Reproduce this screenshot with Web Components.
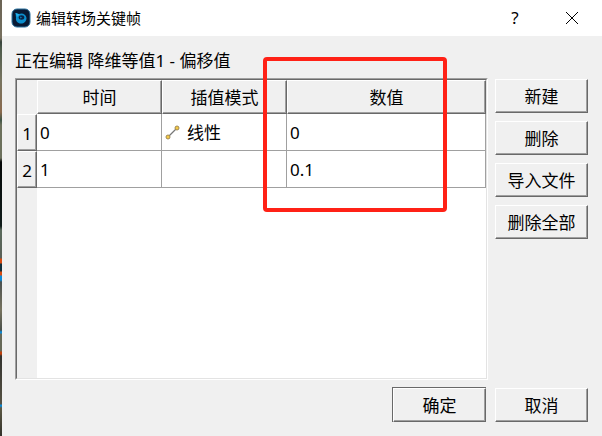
<!DOCTYPE html>
<html lang="zh-CN">
<head>
<meta charset="utf-8">
<title>编辑转场关键帧</title>
<style>
    html, body{
        height: 100%;
        margin: 0;
    }
    body{
        font: 17px/24px "Noto Sans", "Noto Sans CJK SC", sans-serif;
        color: #000;
    }
</style>
</head>
<body>
<keyframe-dialog>
    <title-bar slot="title">编辑转场关键帧</title-bar>
    <span slot="caption">正在编辑 降维等值1 - 偏移值</span>
    <keyframe-table slot="table"></keyframe-table>
    <push-button slot="tools">新建</push-button>
    <push-button slot="tools">删除</push-button>
    <push-button slot="tools">导入文件</push-button>
    <push-button slot="tools">删除全部</push-button>
    <push-button slot="ok" default>确定</push-button>
    <push-button slot="cancel">取消</push-button>
    <highlight-frame slot="mark"></highlight-frame>
</keyframe-dialog>

<script>
const dialogTemplate = document.createElement('template');
dialogTemplate.innerHTML = `
    <style>
        :host{
            display: flex;
            position: relative;
            min-height: 100%;
            background: #f0f0f0;
        }
        .desktop{
            flex: 0 0 2px;
            background: linear-gradient(#6b6455 0, #77705f 38px, #38443c 42px, #4d5a4b 48px, #777460 80px, #8a6a4e 112px, #3f5546 120px, #6c705c 125px, #6c705c 158px, #050808 162px, #101c1a 226px, #5a6a5c 230px, #5a6058 258px, #d84a10 259px, #d84a10 263px, #10303c 264px, #10303c 271px, #d84a10 272px, #d84a10 275px, #0a8ad8 276px, #0a8ad8 280px, #4d5250 282px, #77735f 310px, #4a4f49 330px, #0a8ad8 332px, #0a8ad8 333px, #666958 334px, #666958 351px, #c0400c 352px, #c0400c 354px, #33332f 356px, #565244 404px, #0a8ad8 405px, #0a8ad8 406px, #5c5944 408px, #34322b 100%);
        }
        .window{
            flex: 1;
            display: flex;
            flex-direction: column;
        }
        .content{
            flex: 1;
            display: grid;
            grid-template-columns: 1fr 93px;
            grid-template-rows: auto 1fr auto;
            column-gap: 7px;
            padding: 13px 14px 14px 13px;
        }
        .caption{
            grid-column: 1 / 3;
            padding-bottom: 5px;
        }
        .tools{
            display: flex;
            flex-direction: column;
            gap: 8px;
            padding-top: 1px;
        }
        .footer{
            grid-column: 1 / 3;
            display: grid;
            grid-template-columns: 94px 93px;
            justify-content: end;
            align-items: end;
            gap: 9px;
            padding-top: 7px;
        }
    </style>
    <div class="desktop"></div>
    <div class="window">
        <slot name="title"></slot>
        <div class="content">
            <div class="caption"><slot name="caption"></slot></div>
            <slot name="table"></slot>
            <div class="tools"><slot name="tools"></slot></div>
            <div class="footer">
                <slot name="ok"></slot>
                <slot name="cancel"></slot>
            </div>
        </div>
    </div>
    <slot name="mark"></slot>
`;

class KeyframeDialog extends HTMLElement{
    constructor(){
        super();
        this.attachShadow({mode : 'open'});
        this.shadowRoot.appendChild(dialogTemplate.content.cloneNode(true));
    }
}

const titleTemplate = document.createElement('template');
titleTemplate.innerHTML = `
    <style>
        :host{
            display: flex;
            align-items: center;
            height: 36px;
            padding-left: 9px;
            background: #fff;
            font-size: 15px;
        }
        .logo{
            width: 20px;
            height: 20px;
            margin-right: 5px;
        }
        .text{
            flex: 1;
        }
        button{
            display: flex;
            align-items: center;
            justify-content: center;
            width: 54px;
            height: 36px;
            padding: 0;
            border: 0;
            background: none;
            color: #000;
            font: inherit;
            font-size: 17px;
        }
        .close{
            width: 60px;
        }
    </style>
    <svg class="logo" viewBox="0 0 20 20">
        <rect x="1" y="1" width="18" height="18" rx="5" fill="#081a35" stroke="#2a719d" stroke-width="1"/>
        <path d="M4.500 5 L8 6 C11 4.500 15 6 15.500 10 C15.500 13.500 13 15.500 10 15.500 C6.500 15.500 4.500 13 5 9.500Z" fill="#0c8fce"/>
        <path d="M4.500 5 L8.500 6.500 L6 9Z" fill="#22b0ee"/>
        <ellipse cx="10.500" cy="9.500" rx="2.800" ry="2.200" fill="#0a2346"/>
        <path d="M9 8.500 L11 9.500 L9.500 10.500Z" fill="#0c8fce"/>
    </svg>
    <span class="text"><slot></slot></span>
    <button type="button" aria-label="帮助">?</button>
    <button type="button" class="close" aria-label="关闭">
        <svg width="14" height="14" viewBox="0 0 14 14">
            <path d="M1 1 L13 13 M13 1 L1 13" stroke="#000" fill="none"/>
        </svg>
    </button>
`;

class TitleBar extends HTMLElement{
    constructor(){
        super();
        this.attachShadow({mode : 'open'});
        this.shadowRoot.appendChild(titleTemplate.content.cloneNode(true));
    }
}

const tableTemplate = document.createElement('template');
tableTemplate.innerHTML = `
    <style>
        :host{
            display: block;
            border: 1px solid;
            border-color: #a0a0a0 #fff #fff #a0a0a0;
        }
        .view{
            box-sizing: border-box;
            height: 100%;
            border: 1px solid;
            border-color: #696969 #e3e3e3 #e3e3e3 #696969;
            background: linear-gradient(to right, #f0f0f0 20px, #fff 20px);
        }
        table{
            width: 100%;
            table-layout: fixed;
            border-collapse: separate;
            border-spacing: 0;
        }
        .index{
            width: 20px;
        }
        .column{
            width: 125px;
        }
        th, td{
            box-sizing: border-box;
            height: 37px;
            padding: 2px 0 0;
            font-weight: normal;
        }
        th{
            border: 1px solid;
            border-color: #fff #696969 #696969 #fff;
            box-shadow: inset -1px -1px #a0a0a0;
            background: #f0f0f0;
        }
        thead th, thead td{
            height: 34px;
        }
        tbody td{
            padding-left: 3px;
            border-right: 1px solid #a0a0a0;
            border-bottom: 1px solid #a0a0a0;
            background: #fff;
        }
        .mode{
            display: flex;
            align-items: center;
            gap: 6px;
        }
    </style>
    <div class="view">
        <table>
            <colgroup>
                <col class="index"><col class="column"><col class="column"><col>
            </colgroup>
            <thead>
                <tr><td></td><th scope="col">时间</th><th scope="col">插值模式</th><th scope="col">数值</th></tr>
            </thead>
            <tbody>
                <tr>
                    <th scope="row">1</th>
                    <td>0</td>
                    <td>
                        <div class="mode">
                            <svg width="16" height="16" viewBox="0 0 16 16">
                                <path d="M3 12 L12 3" stroke="#777" stroke-width="1.3"/>
                                <circle cx="3" cy="12" r="2" fill="#f5c945" stroke="#a08a55"/>
                                <circle cx="12" cy="3" r="2" fill="#f5c945" stroke="#a08a55"/>
                            </svg>
                            <span>线性</span>
                        </div>
                    </td>
                    <td>0</td>
                </tr>
                <tr><th scope="row">2</th><td>1</td><td></td><td>0.1</td></tr>
            </tbody>
        </table>
    </div>
`;

class KeyframeTable extends HTMLElement{
    constructor(){
        super();
        this.attachShadow({mode : 'open'});
        this.shadowRoot.appendChild(tableTemplate.content.cloneNode(true));
    }
}

const buttonTemplate = document.createElement('template');
buttonTemplate.innerHTML = `
    <style>
        :host{
            display: block;
        }
        :host([default]){
            border: 1px solid #696969;
            border-bottom: 0;
            border-right: 0;
        }
        button{
            display: block;
            width: 100%;
            height: 34px;
            padding: 2px 0 0;
            border: 1px solid;
            border-color: #fff #696969 #696969 #fff;
            box-shadow: inset -1px -1px #a0a0a0;
            background: #f0f0f0;
            color: #000;
            font: inherit;
        }
    </style>
    <button type="button"><slot></slot></button>
`;

class PushButton extends HTMLElement{
    constructor(){
        super();
        this.attachShadow({mode : 'open'});
        this.shadowRoot.appendChild(buttonTemplate.content.cloneNode(true));
    }
}

const highlightTemplate = document.createElement('template');
highlightTemplate.innerHTML = `
    <style>
        :host{
            position: absolute;
            top: 57px;
            left: 263px;
            box-sizing: border-box;
            width: 184px;
            height: 155px;
            border: 4px solid #ff2116;
            border-radius: 4px;
            pointer-events: none;
        }
    </style>
`;

class HighlightFrame extends HTMLElement{
    constructor(){
        super();
        this.attachShadow({mode : 'open'});
        this.shadowRoot.appendChild(highlightTemplate.content.cloneNode(true));
    }
}

window.customElements.define('push-button',PushButton);
window.customElements.define('title-bar',TitleBar);
window.customElements.define('keyframe-table',KeyframeTable);
window.customElements.define('highlight-frame',HighlightFrame);
window.customElements.define('keyframe-dialog',KeyframeDialog);
</script>
</body>
</html>
